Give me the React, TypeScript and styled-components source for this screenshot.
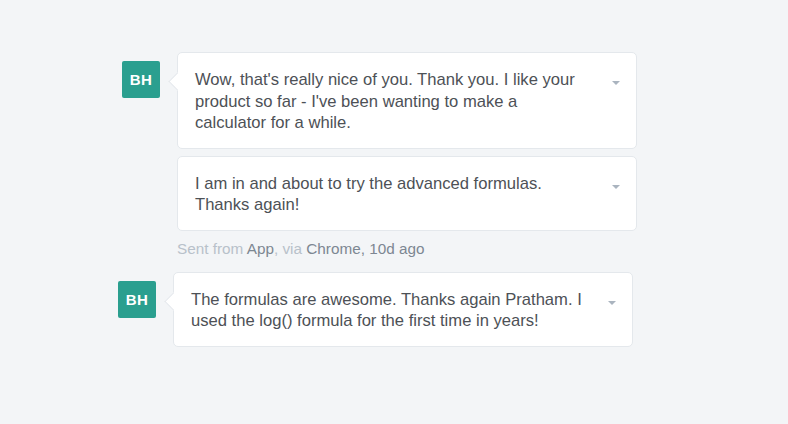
import React from "react";
import styled, { createGlobalStyle } from "styled-components";

const GlobalStyle = createGlobalStyle`
  html, body {
    margin: 0;
    padding: 0;
    background: #f3f5f7;
  }
  body {
    font-family: "Liberation Sans", Arial, sans-serif;
  }
`;

type Msg = { text: string };

type Group = {
  initials: string;
  messages: Msg[];
  meta?: { app: string; browser: string; ago: string };
  shift?: number;
};

const groups: Group[] = [
  {
    initials: "BH",
    messages: [
      {
        text: "Wow, that's really nice of you. Thank you. I like your product so far - I've been wanting to make a calculator for a while.",
      },
      { text: "I am in and about to try the advanced formulas. Thanks again!" },
    ],
    meta: { app: "App", browser: "Chrome", ago: "10d ago" },
  },
  {
    initials: "BH",
    shift: -4,
    messages: [
      {
        text: "The formulas are awesome. Thanks again Pratham. I used the log() formula for the first time in years!",
      },
    ],
  },
];

export default function App() {
  return (
    <>
      <GlobalStyle />
      <Page>
        {groups.map((g, gi) => (
          <Row key={gi} $shift={g.shift ?? 0}>
            <Avatar>{g.initials}</Avatar>
            <Stack>
              {g.messages.map((m, mi) => (
                <Bubble key={mi} $first={mi === 0}>
                  <Body>{m.text}</Body>
                  <Caret />
                </Bubble>
              ))}
              {g.meta && (
                <Meta>
                  Sent from <strong>{g.meta.app}</strong>, via{" "}
                  <strong>
                    {g.meta.browser}, {g.meta.ago}
                  </strong>
                </Meta>
              )}
            </Stack>
          </Row>
        ))}
      </Page>
    </>
  );
}

const Page = styled.div`
  display: flex;
  flex-direction: column;
  gap: 13px;
  padding: 52px 0 0 122px;
  min-height: 100vh;
  box-sizing: border-box;
`;

const Row = styled.div<{ $shift: number }>`
  display: flex;
  align-items: flex-start;
  gap: 17px;
  margin-left: ${(p) => p.$shift}px;
`;

const Avatar = styled.div`
  flex: none;
  width: 38px;
  height: 37px;
  margin-top: 9px;
  border-radius: 2px;
  background: #2a9f8f;
  color: #ffffff;
  font-weight: 700;
  font-size: 15px;
  display: flex;
  align-items: center;
  justify-content: center;
  letter-spacing: 0.3px;
`;

const Stack = styled.div`
  display: flex;
  flex-direction: column;
  gap: 7px;
  width: 460px;
`;

const Bubble = styled.div<{ $first: boolean }>`
  position: relative;
  display: flex;
  align-items: flex-start;
  gap: 21px;
  background: #ffffff;
  border: 1px solid #e4e8ec;
  border-radius: 5px;
  padding: 16px 16px 14px 17px;

  &::before {
    content: "";
    display: ${(p) => (p.$first ? "block" : "none")};
    position: absolute;
    left: -7px;
    top: 22px;
    width: 12px;
    height: 12px;
    background: #ffffff;
    border-left: 1px solid #e4e8ec;
    border-bottom: 1px solid #e4e8ec;
    transform: rotate(45deg);
  }
`;

const Body = styled.p`
  flex: 1;
  margin: 0;
  font-size: 16.6px;
  line-height: 21.5px;
  color: #4d5156;
`;

const Caret = styled.span`
  flex: none;
  width: 0;
  height: 0;
  margin-top: 12px;
  border-left: 4.5px solid transparent;
  border-right: 4.5px solid transparent;
  border-top: 4.5px solid #aab4bf;
`;

const Meta = styled.div`
  font-size: 15.3px;
  line-height: 20px;
  color: #b8c1ca;
  margin-top: 1px;

  strong {
    font-weight: 400;
    color: #7d8792;
  }
`;
